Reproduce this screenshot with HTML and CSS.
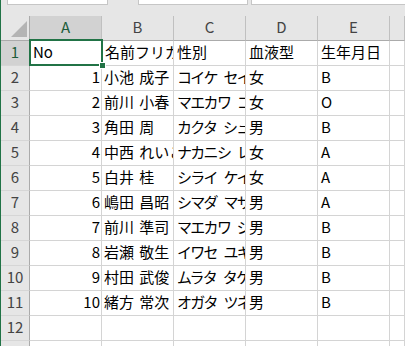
FILE: index.html
```html
<!DOCTYPE html>
<html lang="ja">
<head>
  <meta charset="UTF-8" />
  <title>Sheet1</title>
  <link rel="stylesheet" href="styles.css">
</head>
<body>
  <div class="app">
    <div class="toolbar">
      <div class="box name-box"></div>
      <div class="box mid-box"></div>
      <div class="box formula-box"></div>
    </div>

    <div class="sheet">
      <div class="corner"><span class="corner-mark"></span></div>
      <div class="col-head selected">A</div>
      <div class="col-head">B</div>
      <div class="col-head">C</div>
      <div class="col-head">D</div>
      <div class="col-head">E</div>
      <div class="col-head"></div>

      <div class="row-head selected">1</div>
      <div class="cell">No</div>
      <div class="cell">名前フリガナ</div>
      <div class="cell">性別</div>
      <div class="cell">血液型</div>
      <div class="cell">生年月日</div>
      <div class="cell"></div>

      <div class="row-head">2</div>
      <div class="cell num">1</div>
      <div class="cell name">小池 成子</div>
      <div class="cell kana">コイケ セイコ</div>
      <div class="cell">女</div>
      <div class="cell">B</div>
      <div class="cell"></div>

      <div class="row-head">3</div>
      <div class="cell num">2</div>
      <div class="cell name">前川 小春</div>
      <div class="cell kana">マエカワ コハル</div>
      <div class="cell">女</div>
      <div class="cell">O</div>
      <div class="cell"></div>

      <div class="row-head">4</div>
      <div class="cell num">3</div>
      <div class="cell name">角田 周</div>
      <div class="cell kana">カクタ シュウ</div>
      <div class="cell">男</div>
      <div class="cell">B</div>
      <div class="cell"></div>

      <div class="row-head">5</div>
      <div class="cell num">4</div>
      <div class="cell name">中西 れいこ</div>
      <div class="cell kana">ナカニシ レイコ</div>
      <div class="cell">女</div>
      <div class="cell">A</div>
      <div class="cell"></div>

      <div class="row-head">6</div>
      <div class="cell num">5</div>
      <div class="cell name">白井 桂</div>
      <div class="cell kana">シライ ケイ</div>
      <div class="cell">女</div>
      <div class="cell">A</div>
      <div class="cell"></div>

      <div class="row-head">7</div>
      <div class="cell num">6</div>
      <div class="cell name">嶋田 昌昭</div>
      <div class="cell kana">シマダ マサアキ</div>
      <div class="cell">男</div>
      <div class="cell">A</div>
      <div class="cell"></div>

      <div class="row-head">8</div>
      <div class="cell num">7</div>
      <div class="cell name">前川 準司</div>
      <div class="cell kana">マエカワ ジュンジ</div>
      <div class="cell">男</div>
      <div class="cell">B</div>
      <div class="cell"></div>

      <div class="row-head">9</div>
      <div class="cell num">8</div>
      <div class="cell name">岩瀬 敬生</div>
      <div class="cell kana">イワセ ユキオ</div>
      <div class="cell">男</div>
      <div class="cell">B</div>
      <div class="cell"></div>

      <div class="row-head">10</div>
      <div class="cell num">9</div>
      <div class="cell name">村田 武俊</div>
      <div class="cell kana">ムラタ タケトシ</div>
      <div class="cell">男</div>
      <div class="cell">B</div>
      <div class="cell"></div>

      <div class="row-head">11</div>
      <div class="cell num">10</div>
      <div class="cell name">緒方 常次</div>
      <div class="cell kana">オガタ ツネジ</div>
      <div class="cell">男</div>
      <div class="cell">B</div>
      <div class="cell"></div>

      <div class="row-head">12</div>
      <div class="cell"></div>
      <div class="cell"></div>
      <div class="cell"></div>
      <div class="cell"></div>
      <div class="cell"></div>
      <div class="cell"></div>

      <div class="row-head">13</div>
      <div class="cell"></div>
      <div class="cell"></div>
      <div class="cell"></div>
      <div class="cell"></div>
      <div class="cell"></div>
      <div class="cell"></div>

      <div class="selection"></div>
    </div>
  </div>
</body>
</html>
```

FILE: styles.css
```css
html, body {
  margin: 0;
  padding: 0;
  height: 100%;
  overflow: hidden;
}

body {
  font-family: "Noto Sans CJK JP", "Noto Sans", sans-serif;
  font-size: 15px;
  color: #000;
  background-color: #fff;
}

.app {
  border-left: 1px solid #217346;
  height: 100%;
}

/* strip above the grid */
.toolbar {
  height: 16px;
  background-color: #e6e6e6;
  display: flex;
  align-items: flex-start;
}

.box {
  height: 4px;
  background: #fff;
  border: 1px solid #c6c6c6;
  border-top: none;
}

.name-box {
  width: 99px;
  margin-left: 6px;
}

.mid-box {
  width: 108px;
  margin-left: 30px;
}

.formula-box {
  flex: 1;
  margin-left: 3px;
  border-right: none;
}

/* grid */
.sheet {
  position: relative;
  display: grid;
  grid-template-columns: 29px repeat(5, 72px) 1fr;
  grid-auto-rows: 25px;
}

.sheet > div {
  box-sizing: border-box;
}

.corner,
.col-head,
.row-head {
  background-color: #e6e6e6;
  color: #444;
}

.corner {
  display: flex;
  justify-content: flex-end;
  align-items: flex-end;
  padding: 0 2px 3px 0;
  border-right: 1px solid #ababab;
  border-bottom: 1px solid #ababab;
}

.corner-mark {
  width: 0;
  height: 0;
  border-left: 16px solid transparent;
  border-bottom: 16px solid #b4b4b4;
}

.col-head {
  text-align: center;
  line-height: 22px;
  border-right: 1px solid #c0c0c0;
  border-bottom: 1px solid #ababab;
}

.row-head {
  text-align: center;
  line-height: 22px;
  border-right: 1px solid #ababab;
  border-bottom: 1px solid #d6d6d6;
}

.col-head.selected,
.row-head.selected {
  background-color: #d2d2d2;
  color: #1d5c3a;
}

.cell {
  line-height: 21px;
  padding: 0 3px;
  white-space: nowrap;
  overflow: hidden;
  border-right: 1px solid #d4d4d4;
  border-bottom: 1px solid #d4d4d4;
}

.cell.num {
  text-align: right;
  padding-right: 1px;
}

.cell.name {
  padding-left: 2px;
  word-spacing: 2px;
}

.cell.kana {
  letter-spacing: -1.7px;
  word-spacing: 5px;
}

/* active cell A1 */
.selection {
  position: absolute;
  left: 28px;
  top: 23px;
  width: 74px;
  height: 27px;
  box-sizing: border-box;
  border: 2px solid #217346;
}

.selection::after {
  content: "";
  position: absolute;
  right: -5px;
  bottom: -5px;
  width: 5px;
  height: 5px;
  background: #217346;
  border: 1px solid #fff;
}
```
